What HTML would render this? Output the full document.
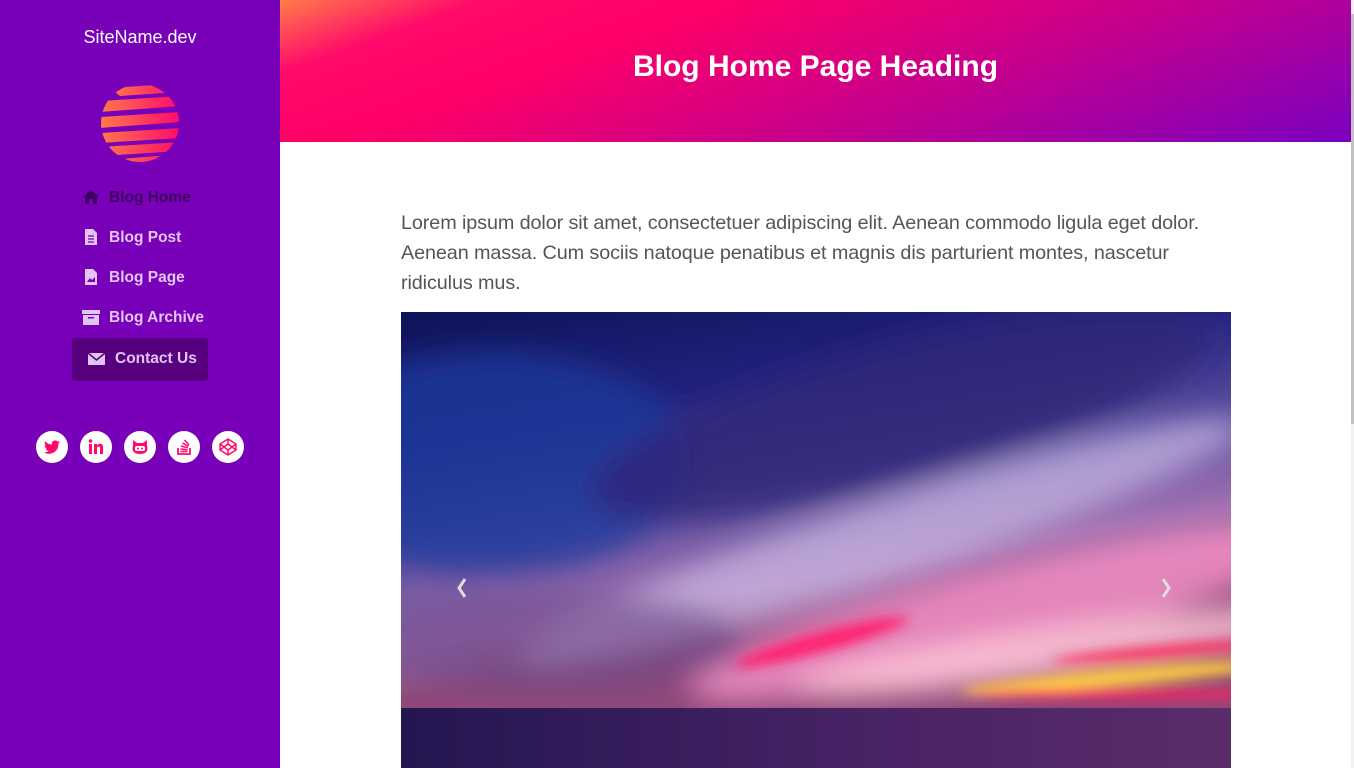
<!DOCTYPE html>
<html><head><meta charset="utf-8"><style>
*{margin:0;padding:0;box-sizing:border-box}
body{width:1354px;height:768px;overflow:hidden;background:#fff;font-family:"Liberation Sans",sans-serif;position:relative}
.side{position:absolute;left:0;top:0;width:280px;height:768px;background:#7800b9}
.site{position:absolute;top:27px;left:0;width:280px;text-align:center;color:#fff;font-size:18px}
.nav{position:absolute;left:0;width:280px;color:#e2c4f0;font-weight:bold;font-size:15.5px}
.nav div{position:absolute;white-space:nowrap}
.ic{position:absolute;left:82px;width:18px;height:16px}
.contact{position:absolute;left:72px;top:338px;width:136px;height:43px;background:#560080;border-radius:3px}
.soc{position:absolute;top:431px;width:32px;height:32px;border-radius:50%;background:#fff}
.soc svg{position:absolute;left:7px;top:7px}
.hdr{position:absolute;left:280px;top:0;width:1071px;height:142px;background:linear-gradient(160deg,#ff7d4a 0%,#ff0a6a 14%,#ff0066 30%,#c00090 65%,#7a00bf 100%)}
.hdr h1{position:absolute;width:100%;top:50px;text-align:center;color:#fff;font-size:30px;font-weight:bold}
.sb{position:absolute;left:1351px;top:0;width:3px;height:768px;background:#f1f1f1}
.sb i{position:absolute;left:0;top:14px;width:3px;height:410px;background:#c1c1c1}
p{position:absolute;left:401px;top:208px;color:#555;font-size:19.8px;line-height:30px;white-space:nowrap;letter-spacing:-0.1px}
.img{position:absolute;left:401px;top:312px;width:830px;height:456px}
</style></head><body>
<div class="side">
<div class="site">SiteName.dev</div>
<svg style="position:absolute;left:100px;top:84px" width="80" height="78" viewBox="0 0 80 78">
<defs><linearGradient id="g" x1="0" x2="1"><stop offset="0" stop-color="#ff7a4a"/><stop offset="1" stop-color="#ff0a6a"/></linearGradient>
<clipPath id="c"><circle cx="40" cy="39" r="39"/></clipPath></defs>
<g clip-path="url(#c)" fill="url(#g)">
<path d="M10 4 L70 0 L80 8 L20 12Z"/><path d="M0 17 L80 12 L80 22 L0 28Z"/><path d="M0 33 L80 28 L80 38 L0 44Z"/>
<path d="M0 49 L80 44 L80 54 L0 59Z"/><path d="M0 63 L80 58 L80 67 L0 72Z"/><path d="M10 76 L80 70 L80 78 L10 80Z"/>
</g></svg>
<div class="nav">
<svg class="ic" style="top:189px" viewBox="0 0 18 16"><path d="M9 1 L1 8 L3 8 L3 15 L7 15 L7 10 L11 10 L11 15 L15 15 L15 8 L17 8Z" fill="#3c0060"/></svg>
<div style="left:109px;top:189px;color:#3c0060">Blog Home</div>
<svg class="ic" style="top:229px" viewBox="0 0 18 16"><path d="M3 0 L11 0 L15 4 L15 16 L3 16Z" fill="#e2c4f0"/><path d="M6 7h6M6 10h6M6 13h6" stroke="#7800b9" stroke-width="1.3"/></svg>
<div style="left:109px;top:229px">Blog Post</div>
<svg class="ic" style="top:269px" viewBox="0 0 18 16"><path d="M3 0 L11 0 L15 4 L15 16 L3 16Z" fill="#e2c4f0"/><path d="M5 13 L8 9 L10 11 L13 8 L13 13Z" fill="#7800b9"/></svg>
<div style="left:109px;top:269px">Blog Page</div>
<svg class="ic" style="top:309px" viewBox="0 0 18 16"><rect x="0" y="1" width="18" height="4" fill="#e2c4f0"/><rect x="1" y="6" width="16" height="10" fill="#e2c4f0"/><rect x="6" y="8" width="6" height="1.5" fill="#7800b9"/></svg>
<div style="left:109px;top:309px">Blog Archive</div>
<div class="contact"></div>
<svg class="ic" style="top:351px;left:88px" viewBox="0 0 18 16"><rect x="0" y="2" width="17" height="12" fill="#e2c4f0"/><path d="M0 2 L8.5 9 L17 2" stroke="#560080" stroke-width="1.5" fill="none"/></svg>
<div style="left:115px;top:350px">Contact Us</div>
</div>
<div class="soc" style="left:36px"><svg width="18" height="18" viewBox="0 0 18 18"><path d="M17 4c-.6.3-1.2.4-1.9.5.7-.4 1.2-1 1.4-1.8-.6.4-1.3.6-2 .8a3.3 3.3 0 0 0-5.6 3C6.2 6.400 3.800 5.200 2.100 3.200c-.9 1.600-.4 3.500 1 4.400-.5 0-1-.2-1.500-.4 0 1.600 1.100 3 2.600 3.300-.5.100-1 .2-1.500.1.400 1.300 1.700 2.300 3.100 2.300A6.600 6.600 0 0 1 1 14.200 9.300 9.300 0 0 0 15.400 6v-.4c.6-.4 1.200-1 1.600-1.600z" fill="#ff0a6a"/></svg></div>
<div class="soc" style="left:80px"><svg width="18" height="18" viewBox="0 0 18 18"><rect x="2" y="6" width="3" height="10" fill="#ff0a6a"/><circle cx="3.5" cy="3" r="1.8" fill="#ff0a6a"/><path d="M7 6h3v1.5c.6-1 1.700-1.700 3-1.700 2.200 0 3 1.300 3 3.700V16h-3v-5.500c0-1.200-.3-2-1.400-2-1.100 0-1.600.8-1.600 2V16H7z" fill="#ff0a6a"/></svg></div>
<div class="soc" style="left:124px"><svg width="18" height="18" viewBox="0 0 18 18"><path d="M2 2 L6 5 H12 L16 2 L16 8 Q17 10 16 13 Q14 16 9 16 Q4 16 2 13 Q1 10 2 8Z" fill="#ff0a6a"/><rect x="4" y="8" width="10" height="5" rx="2" fill="#fff"/><circle cx="7" cy="10.5" r="1" fill="#ff0a6a"/><circle cx="11" cy="10.5" r="1" fill="#ff0a6a"/></svg></div>
<div class="soc" style="left:168px"><svg width="18" height="18" viewBox="0 0 18 18"><path d="M3 10v6h12v-6" stroke="#ff0a6a" stroke-width="1.8" fill="none"/><path d="M5.5 13.5h7M5.5 11l7 .8M6 8l6.800 1.800M7.500 5l6 3.300M9.500 2l4.500 5" stroke="#ff0a6a" stroke-width="1.5"/></svg></div>
<div class="soc" style="left:212px"><svg width="18" height="18" viewBox="0 0 18 18"><path d="M9 1 L17 6 L17 12 L9 17 L1 12 L1 6Z M9 1V6 M1 6L9 12L17 6 M1 12L9 6L17 12 M9 12V17" stroke="#ff0a6a" stroke-width="1.5" fill="none" stroke-linejoin="round"/></svg></div>
</div>
<div class="hdr"><h1>Blog Home Page Heading</h1></div>
<p>Lorem ipsum dolor sit amet, consectetuer adipiscing elit. Aenean commodo ligula eget dolor.<br>Aenean massa. Cum sociis natoque penatibus et magnis dis parturient montes, nascetur<br>ridiculus mus.</p>
<svg class="img" viewBox="0 0 830 456" preserveAspectRatio="none">
<defs>
<linearGradient id="sky" x1="0" y1="0" x2="0.35" y2="1"><stop offset="0" stop-color="#0e1358"/><stop offset="0.3" stop-color="#22237f"/><stop offset="0.55" stop-color="#5c4e9e"/><stop offset="0.75" stop-color="#a070b0"/><stop offset="0.87" stop-color="#904878"/></linearGradient>
<linearGradient id="sea" x1="0" y1="0" x2="1" y2="0"><stop offset="0" stop-color="#241650"/><stop offset="0.6" stop-color="#4a2466"/><stop offset="1" stop-color="#5a2c6a"/></linearGradient>
<filter id="b" x="-50%" y="-50%" width="200%" height="200%"><feGaussianBlur stdDeviation="14"/></filter>
<filter id="b2" x="-50%" y="-50%" width="200%" height="200%"><feGaussianBlur stdDeviation="6"/></filter>
</defs>
<rect width="830" height="396" fill="url(#sky)"/>
<g filter="url(#b)">
<ellipse cx="90" cy="150" rx="200" ry="110" fill="#1c3a9c" opacity=".75"/>
<ellipse cx="480" cy="230" rx="380" ry="40" transform="rotate(-18 480 230)" fill="#d0c0ea" opacity=".65"/>
<ellipse cx="600" cy="300" rx="320" ry="45" transform="rotate(-14 600 300)" fill="#ff9ad0" opacity=".75"/>
<ellipse cx="650" cy="340" rx="260" ry="25" transform="rotate(-8 650 340)" fill="#ffc8d8" opacity=".85"/>
<ellipse cx="500" cy="100" rx="320" ry="70" transform="rotate(-15 500 100)" fill="#2e2478" opacity=".8"/>
<ellipse cx="150" cy="330" rx="200" ry="50" fill="#6a4888" opacity=".6"/>
</g>
<g filter="url(#b2)">
<ellipse cx="420" cy="330" rx="90" ry="10" transform="rotate(-15 420 330)" fill="#ff2070"/>
<ellipse cx="720" cy="365" rx="160" ry="8" transform="rotate(-5 720 365)" fill="#ffd040"/>
<ellipse cx="760" cy="340" rx="110" ry="6" transform="rotate(-5 760 340)" fill="#ff3060"/>
<ellipse cx="730" cy="382" rx="160" ry="5" fill="#ff2060"/>
</g>
<rect y="396" width="830" height="60" fill="url(#sea)"/>
<path d="M64 267 L58 276 L64 285" stroke="#ddd" stroke-width="3" fill="none"/>
<path d="M762 267 L768 276 L762 285" stroke="#ddd" stroke-width="3" fill="none"/>
</svg>
<div class="sb"><i></i></div>
</body></html>
